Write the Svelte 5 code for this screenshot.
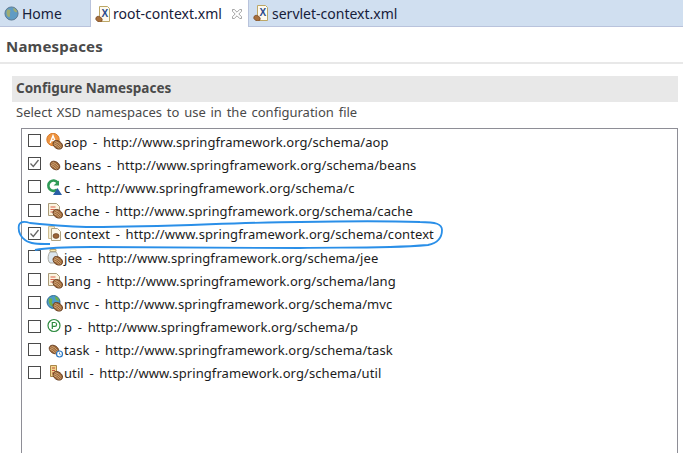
<script lang="ts">
  const namespaces = [
    { name: 'aop', icon: 'aop' },
    { name: 'beans', icon: 'beans', checked: true },
    { name: 'c', icon: 'c' },
    { name: 'cache', icon: 'cache' },
    { name: 'context', icon: 'context', checked: true },
    { name: 'jee', icon: 'jee' },
    { name: 'lang', icon: 'lang' },
    { name: 'mvc', icon: 'mvc' },
    { name: 'p', icon: 'p' },
    { name: 'task', icon: 'task' },
    { name: 'util', icon: 'util' }
  ];
</script>

{#snippet bean(x: number, y: number)}
  <g transform="translate({x} {y}) rotate(35)">
    <ellipse rx="5.2" ry="3.8" fill="#9c6636" stroke="#6a4224" stroke-width="0.9" />
    <path d="M-4 -1.2 Q-1 -2.4 3.5 -1.2M-4.2 .6 Q-1 -.6 4.2 .6M-3.5 2.2 Q-1 1.2 3.5 2.2" fill="none" stroke="#dcb88c" stroke-width="0.7" />
  </g>
{/snippet}

{#snippet xmlIcon()}
  <svg class="tab-icon" viewBox="0 0 16 16">
    <path d="M4.5 .5h8l2 2v13h-10z" fill="#fdfaf0" stroke="#bda766" />
    <text x="9.8" y="11" class="x">X</text>
    <g transform="translate(4 13.2) rotate(35)">
      <ellipse rx="3.4" ry="2.6" fill="#a8703c" stroke="#7a4d2a" stroke-width="0.7" />
    </g>
  </svg>
{/snippet}

{#snippet nsIcon(kind: string)}
  <svg class="ns-icon" viewBox="0 0 18 18">
    {#if kind === 'aop'}
      <circle cx="7" cy="6.500" r="6.200" fill="#ee9440" stroke="#d87c2c" />
      <path d="M4.200 10 7 2.800 9.800 10M5.200 7.600h3.600" fill="none" stroke="#fff" stroke-width="1.400" />
      {@render bean(11.800, 11.800)}
    {:else if kind === 'beans'}
      {@render bean(9, 9.500)}
    {:else if kind === 'c'}
      <path d="M11.500 3.300A5.200 5.200 0 1 0 11 10.600" fill="none" stroke="#2f9a56" stroke-width="2.600" />
      <path d="M7.500 6.500H13V1.500z" fill="#2f9a56" />
      <path d="M7 16 11.500 9 16 16z" fill="#2a5fa6" />
    {:else if kind === 'cache'}
      <path d="M2.500 1.500h8l3 3v9h-11z" fill="#fbf4de" stroke="#a99a78" />
      <path d="M4.500 5h5M4.500 7.500h4M4.500 10h3" stroke="#d9604a" />
      {@render bean(11.800, 11.800)}
    {:else if kind === 'context'}
      <path d="M2.500 1.500h6v12h-6z" fill="#f5ecd0" stroke="#cdbd92" />
      <path d="M5.500 3.500h6l3 3v9h-9z" fill="#fdf9ea" stroke="#b0a280" />
      <ellipse cx="10" cy="11" rx="3" ry="2.400" fill="#9c6636" stroke="#6a4224" stroke-width="0.7" />
    {:else if kind === 'jee'}
      <path d="M4 .5h6v2H4z" fill="#f6e6ae" stroke="#b9a268" />
      <path d="M4 3c-2.500 3-2.500 9 0 11h6c2.500-2 2.500-8 0-11z" fill="#dbe6ef" stroke="#a9a9a0" />
      {@render bean(11.800, 11.800)}
    {:else if kind === 'lang'}
      <path d="M2.500 1.500h8l3 3v9h-11z" fill="#fbf4de" stroke="#a99a78" />
      <path d="M4.500 5h5M4.500 7.500h4M4.500 10h3" stroke="#d9604a" />
      {@render bean(11.800, 11.800)}
    {:else if kind === 'mvc'}
      <circle cx="7.500" cy="7" r="6.500" fill="#4d9bc8" stroke="#2f6f96" />
      <path d="M3 3.500c3-1 4 1 3 3s2 2 1 5c-3 0-5-4-4-8zM9 1.500c2 0 4 2 4 4-2 1-4-1-4-4z" fill="#70b04a" />
      {@render bean(11.800, 11.800)}
    {:else if kind === 'p'}
      <circle cx="8" cy="7.500" r="6" fill="#fff" stroke="#2d8a3e" stroke-width="1.200" />
      <path d="M6.300 11V4.500h2.400a1.800 1.800 0 0 1 0 3.800H6.300" fill="none" stroke="#2d8a3e" stroke-width="1.200" />
    {:else if kind === 'task'}
      {@render bean(8, 8.500)}
      <circle cx="13.500" cy="13" r="3" fill="#fff" stroke="#2b78c4" stroke-width="1.200" />
      <path d="M13.500 11.500v1.600l1.200.8" fill="none" stroke="#2b78c4" stroke-width="0.8" />
    {:else}
      <path d="M4.500 1.500h6v11h-6z" fill="#f2d48c" stroke="#a8864a" />
      <path d="M6 4h3M6 6.500h3M6 9h3" stroke="#c0503a" stroke-width="1.200" />
      {@render bean(11.800, 11.800)}
    {/if}
  </svg>
{/snippet}

{#snippet globe()}
  <svg class="globe" viewBox="0 0 16 16">
    <circle cx="8" cy="8" r="7" fill="#5f9bc4" stroke="#5c7890" />
    <path d="M3.500 4c3-1 4 1 3 3s1 3-1 5C2.500 11 2 6 3.500 4zM10 2c2 .5 4 2.500 4 4.500-2 .5-4.500-1.500-4-4.500z" fill="#a0ad72" />
  </svg>
{/snippet}

<div class="page">
  <div class="tabs">
    <div class="tab home">{@render globe()}<span>Home</span></div>
    <div class="tab active">
      {@render xmlIcon()}<span>root-context.xml</span>
      <svg class="close" viewBox="0 0 11 11">
        <path d="M.5.5h2l3 3 3-3h2v2l-3 3 3 3v2h-2l-3-3-3 3h-2v-2l3-3-3-3z" fill="none" stroke="#9a9a9a" />
      </svg>
    </div>
    <div class="tab servlet">{@render xmlIcon()}<span>servlet-context.xml</span></div>
  </div>

  <div class="page-title">Namespaces</div>

  <section class="section">
    <h2>Configure Namespaces</h2>
    <p>Select XSD namespaces to use in the configuration file</p>
    <div class="list">
      {#each namespaces as ns}
        <div class="row">
          <span class="check" class:checked={ns.checked}>
            {#if ns.checked}
              <svg viewBox="0 0 11 11"><path d="M1.500 5.500 4.300 8.500 9.500 2" fill="none" stroke="#666" stroke-width="1.300" /></svg>
            {/if}
          </span>
          {@render nsIcon(ns.icon)}
          <span class="label">{ns.name} - http://www.springframework.org/schema/{ns.name}</span>
        </div>
      {/each}
    </div>
  </section>

  <!-- hand drawn marker over the context row -->
  <svg class="marker" viewBox="0 0 683 453">
    <path d="M50 244C38 244 30 244 25 240 20 236 18 230 19 225 20 222 24 221 30 223 50 225 70 227 92 227 170 227 240 222 300 222 350 221 390 221 420 222 436 222 442 224 442 230 442 238 438 243 428 245 380 249 340 247 300 248 220 248 150 247 92 247 70 247 50 247 35 250" fill="none" stroke="#2a8fe8" stroke-width="1.800" />
  </svg>
</div>

<style>
  :global(body) {
    margin: 0;
    background: #fff;
  }

  .page {
    position: relative;
    width: 683px;
    height: 453px;
    overflow: hidden;
    font-family: "Noto Sans", sans-serif;
    color: #1a1a1a;
  }

  .tabs {
    display: flex;
    height: 26px;
    background: #d0dff0;
    border-bottom: 1px solid #b9c3dc;
    font-size: 14px;
  }

  .tab {
    display: flex;
    align-items: center;
    gap: 3px;
  }

  .tab span {
    color: #16203a;
  }

  .home {
    width: 90px;
    padding-left: 4px;
    box-sizing: border-box;
  }

  .active {
    width: 159px;
    height: 27px;
    box-sizing: border-box;
    padding-left: 4px;
    gap: 2px;
    background: #fff;
    border-left: 1px solid #b9c3dc;
    border-right: 1px solid #b9c3dc;
  }

  .servlet {
    padding-left: 4px;
  }

  .globe {
    width: 15px;
    height: 15px;
  }

  .tab-icon {
    width: 16px;
    height: 16px;
  }

  .x {
    font: bold 10px "Liberation Sans", sans-serif;
    fill: #2a4a8c;
    text-anchor: middle;
  }

  .close {
    width: 10px;
    height: 10px;
    margin-left: 8px;
  }

  .page-title {
    height: 33px;
    padding: 2px 0 0 6px;
    line-height: 35px;
    border-bottom: 2px solid #e8e8e8;
    font-size: 15px;
    letter-spacing: 0.2px;
    font-weight: 700;
    color: #4a4a4a;
  }

  .section {
    padding: 12px 5px 0 12px;
  }

  h2 {
    margin: 0;
    height: 26px;
    padding-left: 4px;
    line-height: 24px;
    background: #e8e8e8;
    font-size: 13.5px;
    font-weight: 700;
    color: #4a4a4a;
  }

  p {
    margin: 0;
    padding-left: 4px;
    height: 26px;
    line-height: 20px;
    font-size: 13px;
    word-spacing: 1.4px;
    color: #4a4a4a;
  }

  .list {
    margin-left: 9px;
    height: 330px;
    box-sizing: border-box;
    border: 1px solid #8e8e96;
    padding-top: 1px;
  }

  .row {
    display: flex;
    align-items: center;
    height: 23.2px;
    padding-left: 6px;
  }

  .check {
    width: 11px;
    height: 11px;
    flex: none;
    border: 1px solid #4a4a4a;
    background: #fff;
    margin-top: -2px;
  }

  .check svg {
    display: block;
    width: 11px;
    height: 11px;
  }

  .ns-icon {
    width: 18px;
    height: 18px;
    flex: none;
    margin-left: 5px;
  }

  .label {
    font-size: 13px;
    letter-spacing: 0.08px;
    word-spacing: 2.2px;
    color: #1c1c1c;
  }

  .marker {
    position: absolute;
    left: 0;
    top: 0;
    width: 683px;
    height: 453px;
    pointer-events: none;
  }
</style>
